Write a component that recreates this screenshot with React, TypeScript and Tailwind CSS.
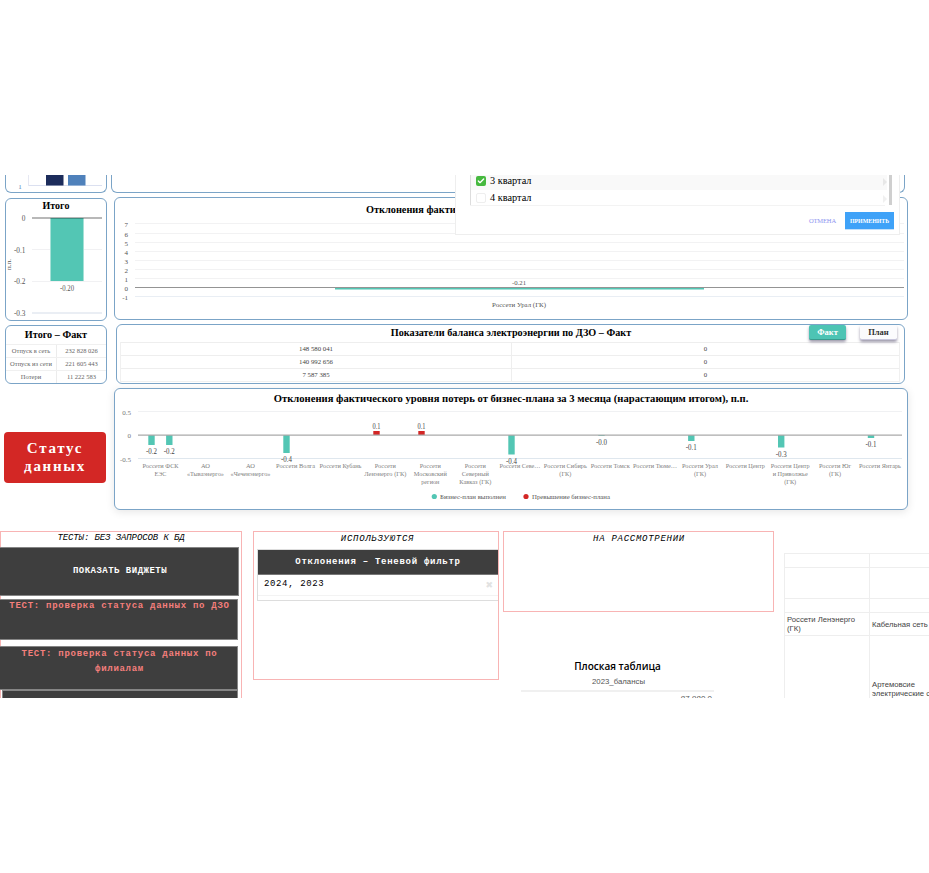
import type { ReactNode } from "react";
import { Check } from "lucide-react";

const SERIF = "font-['Liberation_Serif','Times_New_Roman',serif]";
const MONO = "font-['Liberation_Mono','Courier_New',monospace]";
const SANS = "font-['Liberation_Sans',Arial,sans-serif]";

type LabelProps = { x: number; y: number; w?: number; size?: number; fill?: string; children: ReactNode };

function Label({ x, y, w, size = 7, fill = "#555", children }: LabelProps) {
  return (
    <text x={x} y={y} textAnchor="middle" fontSize={size} fill={fill} textLength={w} lengthAdjust="spacingAndGlyphs">
      {children}
    </text>
  );
}

function Card({ className, children }: { className: string; children?: ReactNode }) {
  return <section className={`shrink-0 overflow-hidden rounded-[6px] border border-[#7ba4c7] bg-white ${className}`}>{children}</section>;
}

function TopBars() {
  return (
    <svg className="block h-[17px] w-[101px]" viewBox="6 175 101 17">
      <path d="M28.5 175V186" stroke="#e6e8f2" />
      <path d="M29 185.5H102" stroke="#dbe0f0" />
      <rect x="46" y="175" width="17.500" height="10.500" fill="#1c2c5b" />
      <rect x="68" y="175" width="17.500" height="10.500" fill="#4f81bb" />
      <Label x={20} y={189} fill="#5b7fb8">1</Label>
    </svg>
  );
}

function TotalChart() {
  const ticks: [string, number][] = [["0", 218], ["-0.1", 250], ["-0.2", 281], ["-0.3", 313]];
  return (
    <svg className="block h-[107px] w-[101px]" viewBox="6 213 101 107">
      <path d="M32 249.500H102M32 281.500H102" stroke="#f1f1f3" />
      <path d="M32 313H102" stroke="#e3e9f1" strokeWidth="1.500" />
      <rect x="50" y="218" width="34" height="63" fill="#a5e0d6" />
      <rect x="51" y="218" width="32" height="63" fill="#53c6b4" />
      <path d="M32 218H102" stroke="#000" strokeOpacity="0.280" strokeWidth="2" />
      {ticks.map(([t, y]) => (
        <text key={t} x="25.500" y={y + 2.700} textAnchor="end" fontSize="7.300" fill="#555">{t}</text>
      ))}
      <text transform="translate(11 270) rotate(-90)" fontSize="7" fill="#555">п.п.</text>
      <Label x={67} y={291} w={14} size={7.5}>-0.20</Label>
    </svg>
  );
}

function UralChart() {
  const ticks: [string, number][] = [["7", 223.5], ["6", 233.5], ["5", 242.5], ["4", 251.5], ["3", 260.5], ["2", 269.5], ["1", 278.5], ["0", 287.500], ["-1", 296.500]];
  return (
    <svg className="block h-[101px] w-[792px]" viewBox="115 218 792 101">
      {ticks.map(([t, y]) => (
        <g key={t}>
          {t !== "0" && <path d={`M135 ${y}H904`} stroke={t === "-1" ? "#e9eef4" : "#f2f2f3"} />}
          <text x="128" y={y + 3} textAnchor="end" fontSize="7" fill="#555">{t}</text>
        </g>
      ))}
      <path d="M135 287.500H904" stroke="#949494" />
      <path d="M335 288.700H704" stroke="#53c6b4" strokeWidth="1.500" />
      <Label x={519} y={285} w={14}>-0.21</Label>
      <Label x={519} y={307} w={54}>Россети Урал (ГК)</Label>
    </svg>
  );
}

type Company = { x: number; lines: [string, number][] };

const companies: Company[] = [
  { x: 160.5, lines: [["Россети ФСК", 36], ["ЕЭС", 12]] },
  { x: 205.500, lines: [["АО", 9], ["«Тываэнерго»", 37]] },
  { x: 250.500, lines: [["АО", 9], ["«Чеченэнерго»", 40]] },
  { x: 295.500, lines: [["Россети Волга", 39]] },
  { x: 340.500, lines: [["Россети Кубань", 42]] },
  { x: 385.300, lines: [["Россети", 21], ["Ленэнерго (ГК)", 42]] },
  { x: 430.300, lines: [["Россети", 21], ["Московский", 33], ["регион", 18]] },
  { x: 475.300, lines: [["Россети", 21], ["Северный", 27], ["Кавказ (ГК)", 32]] },
  { x: 520, lines: [["Россети Севе…", 41]] },
  { x: 565.300, lines: [["Россети Сибирь", 43], ["(ГК)", 12]] },
  { x: 610.200, lines: [["Россети Томск", 39]] },
  { x: 655, lines: [["Россети Тюме…", 44]] },
  { x: 700, lines: [["Россети Урал", 36], ["(ГК)", 12]] },
  { x: 745.300, lines: [["Россети Центр", 39]] },
  { x: 790.200, lines: [["Россети Центр", 39], ["и Приволжье", 35], ["(ГК)", 12]] },
  { x: 835, lines: [["Россети Юг", 32], ["(ГК)", 12]] },
  { x: 880, lines: [["Россети Янтарь", 42]] },
];

const bars = [
  { x: 151.5, to: 445, label: "-0.2", ly: 454 },
  { x: 169.3, to: 445, label: "-0.2", ly: 454 },
  { x: 286.5, to: 453, label: "-0.4", ly: 462 },
  { x: 376.5, to: 431, label: "0.1", ly: 429 },
  { x: 421.5, to: 431, label: "0.1", ly: 429 },
  { x: 511.5, to: 454.5, label: "-0.4", ly: 464 },
  { x: 601.5, to: 436, label: "-0.0", ly: 445 },
  { x: 691.3, to: 441, label: "-0.1", ly: 450 },
  { x: 781.2, to: 447.5, label: "-0.3", ly: 457 },
  { x: 871, to: 438, label: "-0.1", ly: 447 },
];

function DeviationChart() {
  return (
    <svg className="block h-[103px] w-[792px]" viewBox="115 406 792 103">
      <path d="M138 411.500H902" stroke="#f0f1f3" />
      <path d="M138 458.500H902" stroke="#dfe7ee" />
      {bars.map((b) => {
        const up = b.to < 435;
        const top = up ? b.to : 435;
        const height = Math.abs(b.to - 435);
        return <rect key={b.x} x={b.x - 3.2} y={top} width="6.400" height={height} fill={up ? "#d32725" : "#53c6b4"} />;
      })}
      <path d="M138 435.200H902" stroke="#aaa" strokeWidth="1.300" />
      {[["0.5", 415], ["0", 438], ["-0.5", 462]].map(([t, y]) => (
        <text key={t} x="131" y={y} textAnchor="end" fontSize="7" fill="#777">{t}</text>
      ))}
      {companies.map((c) => c.lines.map(([t, w], i) => (
        <Label key={`${c.x}-${i}`} x={c.x} y={468 + i * 8} w={w} size={6.5} fill="#808080">{t}</Label>
      )))}
      {bars.map((b) => <Label key={b.x} x={b.x} y={b.ly} w={b.to < 435 ? 8 : 11} size={7.5} fill="#444">{b.label}</Label>)}
      <circle cx="434.300" cy="496.500" r="2.600" fill="#53c6b4" />
      <Label x={473} y={499} w={66} size={7}>Бизнес-план выполнен</Label>
      <circle cx="526" cy="496.500" r="2.600" fill="#d32725" />
      <Label x={571} y={499} w={78} size={7}>Превышение бизнес-плана</Label>
    </svg>
  );
}

function QuarterMenu() {
  return (
    <div className="absolute left-[455px] top-0 flex h-[60px] w-[445px] flex-col border-x border-b border-[#eeeeee] bg-white text-[10.300px] text-black">
      <div className="mx-[14px] flex h-[31px] flex-col border-b border-[#f3f3f3]">
        <div className="flex h-[30px] border-l border-[#dddddd]">
          <div className="flex-1">
            <div className="flex h-[15px] items-start gap-[4px] bg-[#f9f9f9] pl-[5px]">
              <span className="mt-[1px] flex size-[10px] items-center justify-center rounded-[2px] bg-[#46b93f]"><Check size={8} strokeWidth={4} color="white" /></span>
              <span className="leading-[12px]">3 квартал</span>
              <span className="ml-auto mt-[3px] size-0 border-y-[4px] border-l-[4px] border-y-transparent border-l-[#e7e7e7]" />
            </div>
            <div className="flex h-[15px] items-start gap-[4px] pl-[5px]">
              <span className="mt-[3px] size-[10px] rounded-[2px] border border-[#eeeeee]" />
              <span className="mt-[2px] leading-[12px]">4 квартал</span>
              <span className="ml-auto mt-[5px] size-0 border-y-[4px] border-l-[4px] border-y-transparent border-l-[#f0f0f0]" />
            </div>
          </div>
          <div className="ml-[2px] mr-[-7px] w-[3px] bg-[#cfcfcf]" />
        </div>
      </div>
      <div className="flex items-center justify-end gap-[9px] pr-[5px] pt-[6px]">
        <span className="text-[6.500px] tracking-[-0.1px] text-[#8c93f0]">ОТМЕНА</span>
        <button className="h-[18px] w-[49px] whitespace-nowrap border-b border-[#c4e1fb] bg-[#3fa2f8] text-[5.900px] font-bold leading-[18px] text-white">ПРИМЕНИТЬ</button>
      </div>
    </div>
  );
}

function DarkButton({ className, children }: { className: string; children?: ReactNode }) {
  return <div className={`shrink-0 border border-[#858585] bg-[#3e3e3e] text-center font-bold ${className}`}>{children}</div>;
}

const totals = [["Отпуск в сеть", "232 828 026"], ["Отпуск из сети", "221 605 443"], ["Потери", "11 222 583"]];
const balances = ["148 580 041", "140 992 656", "7 587 385"];

export default function App() {
  return (
    <main className={`h-[873px] w-[929px] overflow-hidden bg-white pt-[175px] ${SERIF}`}>
      <div className="relative flex h-[523px] flex-col overflow-hidden">
        <div className="flex h-[22px] shrink-0 items-start gap-[4px] pl-[5px]">
          <Card className="h-[18px] w-[102px] rounded-t-none border-t-0"><TopBars /></Card>
          <Card className="h-[18px] w-[794px] rounded-t-none border-t-0" />
        </div>

        <div className="flex h-[127px] shrink-0 items-start gap-[7px] pl-[5px]">
          <Card className="mt-px h-[123px] w-[102px]">
            <h2 className="h-[14px] text-center text-[10px] font-bold leading-[14px]">Итого</h2>
            <TotalChart />
          </Card>
          <Card className="h-[123px] w-[794px]">
            <div className="flex h-[20px] justify-between">
              <h2 className="whitespace-nowrap pl-[251px] text-[10.300px] font-bold leading-[24px]">Отклонения фактического уровня</h2>
              <span className="mr-[7px] mt-[2px] h-[15px] border-l border-dashed border-[#999999]" />
            </div>
            <UralChart />
          </Card>
        </div>

        <div className="flex h-[64px] shrink-0 items-start gap-[9px] pl-[5px]">
          <Card className="mt-px h-[59px] w-[102px]">
            <h2 className="h-[18px] text-center text-[10.200px] font-bold leading-[18px]">Итого – Факт</h2>
            <div className="text-[6.500px] leading-[12px] text-[#666666]">
              {totals.map(([name, value]) => (
                <div key={name} className="flex h-[13px] border-t border-[#f0f0f0] text-center">
                  <span className="w-[51px] border-r border-[#ececec]">{name}</span>
                  <span className="flex-1">{value}</span>
                </div>
              ))}
            </div>
          </Card>
          <Card className="relative h-[60px] w-[789px]">
            <h2 className="h-[17px] pl-px text-center text-[10.200px] font-bold leading-[16px]">Показатели баланса электроэнергии по ДЗО – Факт</h2>
            <div className="ml-[3px] mr-[4px] border-x border-b border-[#f0f0f0] text-[6.800px] leading-[11px] text-[#444444]">
              {balances.map((value) => (
                <div key={value} className="flex h-[13px] border-t border-[#eeeeee] text-center">
                  <span className="w-[391px] border-r border-[#eeeeee]">{value}</span>
                  <span className="flex-1">0</span>
                </div>
              ))}
            </div>
            <div className="absolute right-[7px] top-0 flex gap-[14px] text-[8.500px] font-bold leading-[15px]">
              <button className="h-[15px] w-[37px] rounded-[2px] border-b border-[#3a9b8e] bg-[#4dc4b4] text-white shadow-[0_2px_3px_rgba(40,30,70,0.45)]">Факт</button>
              <button className="h-[15px] w-[37px] rounded-[2px] border-b border-[#c8c6dc] bg-[#fbfbfd] text-[#333333] shadow-[0_2px_3px_rgba(40,30,70,0.45)]">План</button>
            </div>
          </Card>
        </div>

        <div className="flex h-[143px] shrink-0 items-start gap-[8px] pl-[4px]">
          <button className="mt-[44px] h-[51px] w-[102px] shrink-0 rounded-[4px] bg-[#d32725] pb-[2px] text-[15px] font-bold leading-[18px] tracking-[1.700px] text-white">Статус<br />данных</button>
          <Card className="h-[122px] w-[794px] shadow-[0_2px_8px_rgba(0,0,0,0.100)]">
            <h2 className="h-[17px] whitespace-nowrap text-center text-[10.640px] font-bold leading-[20px]">Отклонения фактического уровня потерь от бизнес-плана за 3 месяца (нарастающим итогом), п.п.</h2>
            <DeviationChart />
          </Card>
        </div>

        <div className={`flex h-[167px] shrink-0 items-start ${MONO} text-[9px]`}>
          <section className="h-[190px] w-[242px] shrink-0 border border-[#f8b4b4] pr-[2px]">
            <h2 className="h-[15px] pl-[2px] text-center italic leading-[13px] tracking-[-0.100px] text-black">ТЕСТЫ: БЕЗ ЗАПРОСОВ К БД</h2>
            <DarkButton className="ml-[-2px] h-[49px] pl-[2px] leading-[47px] tracking-[0.480px] text-white">ПОКАЗАТЬ ВИДЖЕТЫ</DarkButton>
            <DarkButton className="ml-[-2px] mr-px mt-[3px] h-[41px] whitespace-nowrap pl-[2px] leading-[13px] tracking-[0.720px] text-[#f57f7c]">ТЕСТ: проверка статуса данных по ДЗО</DarkButton>
            <DarkButton className="ml-[-2px] mr-px mt-[6px] h-[44px] whitespace-nowrap pl-[2px] leading-[15px] tracking-[0.720px] text-[#f57f7c]">ТЕСТ: проверка статуса данных по<br />филиалам</DarkButton>
            <DarkButton className="ml-px mr-px h-[20px]" />
          </section>
          <section className="ml-[11px] h-[149px] w-[246px] shrink-0 border border-[#f8b4b4] pl-[3px]">
            <h2 className="h-[17px] text-center italic leading-[15px] tracking-[0.720px] text-black">ИСПОЛЬЗУЮТСЯ</h2>
            <div className="h-[52px] border border-r-0 border-[#dddddd]">
              <div className="h-[25px] border-b border-[#777777] bg-[#3e3e3e] text-center font-bold leading-[25px] tracking-[0.720px] text-white">Отклонения – Теневой фильтр</div>
              <div className="flex h-[21px] items-center justify-between border-b border-[#f3f3f3] pl-[6px] pr-[5px] text-black"><span className="tracking-[0.640px]">2024, 2023</span><span className="mt-[2px] font-['DejaVu_Sans',sans-serif] text-[9px] text-[#e2e2e2]">✖</span></div>
            </div>
          </section>
          <div className="ml-[4px] w-[271px] shrink-0">
            <section className="h-[81px] border border-[#f8b4b4]"><h2 className="pl-px text-center italic leading-[15px] tracking-[0.720px] text-black">НА РАССМОТРЕНИИ</h2></section>
            <div className={`ml-[18px] mt-[44px] w-[193px] text-center ${SANS}`}>
              <h2 className="h-[19px] font-['Open_Sans',sans-serif] text-[10px] font-semibold leading-[20px] text-black">Плоская таблица</h2>
              <p className="h-[15px] pl-[2px] text-[7.800px] leading-[13px] text-[#555555]">2023_балансы</p>
              <p className="border-t-2 border-[#f0f0f0] pr-[2px] text-right text-[8px] leading-[13px] text-[#555555]">87 980,0</p>
            </div>
          </div>
          <div className={`ml-[10px] mt-[22px] grid h-[190px] w-[200px] shrink-0 grid-cols-[85px_115px] grid-rows-[14px_31px_14px_23px_107px] border-l border-t border-[#eeeeee] text-[7.700px] leading-[9px] text-[#444444] ${SANS}`}>
            {["", "", "", "", "", "", "Россети Ленэнерго (ГК)", "Кабельная сеть", "", "Артемовсие\nэлектрические сети"].map((text, i) => (
              <div key={i} className="flex items-center whitespace-pre-line border-b border-r border-[#eeeeee] px-[2px]">{text}</div>
            ))}
          </div>
        </div>
        <QuarterMenu />
      </div>
    </main>
  );
}
